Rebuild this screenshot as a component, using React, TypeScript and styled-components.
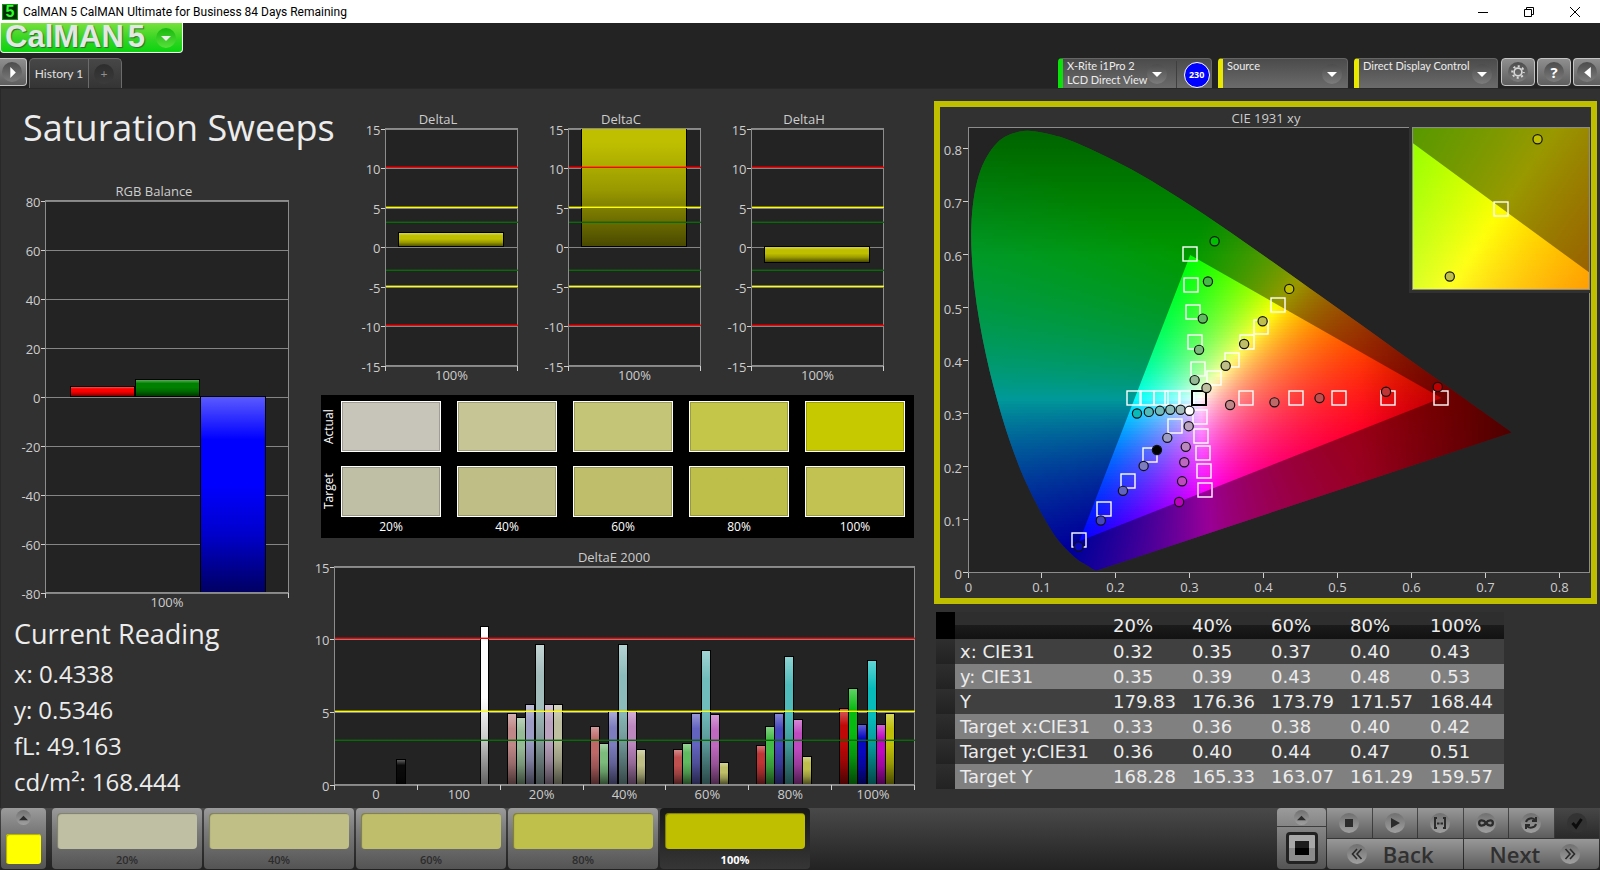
import React from "react";
import styled, { createGlobalStyle, css } from "styled-components";

const GlobalStyle = createGlobalStyle`
  *, *::before, *::after { box-sizing: border-box; }
  html, body { margin: 0; padding: 0; background: #313131; }
  body { font-family: "Open Sans", Lato, sans-serif; color: #ececec; }
  button { font: inherit; color: inherit; padding: 0; margin: 0; border: 0; background: none; cursor: pointer; }
  svg { display: block; }
`;

/* ---------- window frame ---------- */

const Page = styled.div`
  min-height: 100vh;
  display: flex;
  flex-direction: column;
`;

const TitleBar = styled.header`
  display: flex;
  align-items: center;
  height: 23px;
  padding: 0 20px 0 2px;
  background: #fff;
  color: #000;
  font: 12px/22px Roboto, "Open Sans", sans-serif;
`;

const AppMark = styled.span`
  width: 16px;
  height: 16px;
  margin-right: 5px;
  background: #032c03;
  border: 1px solid #0a9f0a;
  color: #2bff2b;
  font: bold 16px/14px "Liberation Sans", sans-serif;
  text-align: center;
`;

const WindowControls = styled.div`
  display: flex;
  gap: 36px;
  margin-left: auto;
`;

const WindowButton = styled.button`
  width: 10px;
  height: 12px;
`;

const HeaderArea = styled.div`
  background: #232323;
`;

const Logo = styled.button`
  display: flex;
  align-items: center;
  justify-content: space-between;
  width: 183px;
  height: 30px;
  padding: 0 6px 2px 4px;
  border: 1px solid #e6ffe6;
  border-top: 0;
  border-radius: 0 0 4px 4px;
  background: linear-gradient(#79e03c, #35d523 55%, #0bd30f);
  cursor: pointer;
`;

const LogoText = styled.span`
  display: flex;
  gap: 4px;
  font: bold 31px/30px "Liberation Sans", Arial, sans-serif;
  color: #e4e8e4;
  text-shadow: 1px 1px 1px #2c6d2c;
`;

const LogoArrow = styled.span`
  display: grid;
  place-items: center;
  width: 20px;
  height: 20px;
  margin-top: 2px;
  border-radius: 50%;
  background: linear-gradient(#17b80f, #58e03a);
`;

const Toolbar = styled.div`
  display: flex;
  align-items: flex-end;
  height: 35px;
`;

const Tabs = styled.nav`
  display: flex;
  margin-left: 2px;
  border: 1px solid #6b6b6b;
  border-bottom: 0;
  border-radius: 5px 5px 0 0;
  background: linear-gradient(#474747, #343434);
`;

const Tab = styled.button<{ $dim?: boolean }>`
  display: grid;
  place-items: center;
  height: 29px;
  width: ${(p) => (p.$dim ? 33 : 58)}px;
  padding-right: ${(p) => (p.$dim ? 2 : 0)}px;
  border-left: ${(p) => (p.$dim ? "1px solid #6b6b6b" : "0")};
  font: 12px/16px Lato, "Open Sans", sans-serif;
  color: #e0e0e0;
`;

const Round = styled.span<{ $dark?: boolean }>`
  display: grid;
  place-items: center;
  flex: none;
  width: 20px;
  height: 20px;
  border-radius: 50%;
  background: ${(p) => (p.$dark ? "linear-gradient(#2d2d2d, #3b3b3b)" : "linear-gradient(#4c4c4c, #7c7c7c)")};
  color: ${(p) => (p.$dark ? "#909090" : "#fff")};
`;

const Devices = styled.div`
  display: flex;
  align-items: flex-start;
  gap: 6px;
  margin-left: auto;
`;

const Device = styled.div<{ $accent: string; $width: number }>`
  display: flex;
  width: ${(p) => p.$width}px;
  height: 30px;
  border: 1px solid #666;
  border-bottom: 0;
  border-left: 5px solid ${(p) => p.$accent};
  border-radius: 4px 4px 0 0;
  background: linear-gradient(#4b4b4b, #6b6b6b);
`;

const DeviceButton = styled.button<{ $gauge?: boolean }>`
  display: flex;
  flex: 1;
  justify-content: space-between;
  padding: 0 ${(p) => (p.$gauge ? 9 : 5)}px 0 4px;
  text-align: left;
  font: 11px/14px Lato, "Open Sans", sans-serif;
  white-space: nowrap;

  ${Round} { margin-top: 5px; }
`;

const DeviceGauge = styled.div`
  display: grid;
  place-items: center;
  width: 35px;
  margin-top: 2px;
  padding-left: 5px;
  border-left: 1px solid #3f3f3f;
`;

const GaugeBadge = styled.span`
  width: 26px;
  height: 26px;
  border: 1px solid #fff;
  border-radius: 50%;
  background: #00f;
  font: bold 9px/24px "Open Sans", sans-serif;
  text-align: center;
  color: #fff;
`;

const IconButtons = styled.div`
  display: flex;
  gap: 2px;
  margin-left: -3px;
`;

const IconButton = styled.button<{ $edge?: "left" | "right" }>`
  display: grid;
  place-items: center;
  align-self: flex-start;
  width: ${(p) => (p.$edge ? 27 : 34)}px;
  height: 28px;
  border: 1px solid #c4c4c4;
  border-radius: 4px;
  background: linear-gradient(#8f8f8f, #5e5e5e);
  ${(p) => p.$edge === "left" && css`margin: 5px 0 0; padding-right: 2px; border-left: 0; border-radius: 0 4px 4px 0;`}
  ${(p) => p.$edge === "right" && css`border-right: 0; border-radius: 4px 0 0 4px;`}
`;

/* ---------- workspace ---------- */

const Workspace = styled.main`
  flex: 1;
  display: grid;
  grid-template-columns: minmax(0, 310fr) minmax(0, 614fr) minmax(0, 676fr);
  align-items: start;
  box-shadow: inset 1px 1px #282828;
  background: #313131;
`;

const Column = styled.section<{ $top: number; $left?: number; $right?: number }>`
  padding: ${(p) => p.$top}px ${(p) => p.$right ?? 0}px 0 ${(p) => p.$left ?? 0}px;
`;

const Chart = styled.svg`
  width: 100%;
  height: auto;
  font-family: "Open Sans", Lato, sans-serif;
  font-size: 13px;
  fill: #cdcdcd;
`;

const PageTitle = styled.h1`
  margin: 0 -40px 28px 23px;
  font-size: 36px;
  line-height: 44px;
  font-weight: 400;
  white-space: nowrap;
`;

const Reading = styled.dl`
  margin: 4px 0 0 14px;
  font-size: 24px;
  line-height: 36px;
`;

const ReadingTitle = styled.h2`
  margin: 2px 0 0;
  padding-left: 14px;
  font-size: 27px;
  line-height: 36px;
  font-weight: 400;
`;

const ReadingRow = styled.div`
  display: flex;
  gap: 6px;
  dt, dd { margin: 0; }
`;

const DeltaRow = styled.div`
  display: grid;
  grid-template-columns: repeat(3, minmax(0, 1fr));
  padding: 0 33px 0 32px;
`;

const SwatchPanel = styled.div`
  display: flex;
  flex-direction: column;
  gap: 14px;
  height: 143px;
  margin: 8px 10px 9px 11px;
  padding: 6px 9px 0 0;
  background: #000;
  color: #fff;
  font-size: 12px;
  line-height: 14px;
`;

const SwatchRow = styled.div`
  display: grid;
  grid-template-columns: 20px 1fr;
`;

const SwatchCells = styled.div`
  display: grid;
  grid-template-columns: repeat(5, minmax(0, 1fr));
  gap: 16px;
  text-align: center;
`;

const SwatchSide = styled.div`
  writing-mode: vertical-rl;
  transform: rotate(180deg);
  width: 16px;
  line-height: 16px;
  text-align: center;
`;

const Swatch = styled.div<{ $color: string }>`
  height: 51px;
  border: 1px solid #fff;
  box-shadow: inset 0 0 0 1px rgba(0, 0, 0, 0.2);
  background: ${(p) => p.$color};
`;

const SwatchLabels = styled(SwatchRow)`
  margin-top: -11px;
`;

const CieFrame = styled.div`
  border: 6px solid #bfbf00;
  background: #313131;
`;

const DataTable = styled.table`
  width: 568px;
  margin: 8px 0 0 2px;
  border-collapse: collapse;
  table-layout: fixed;
  font: 18px/25px "DejaVu Sans", sans-serif;
  color: #ececec;
  text-align: left;
  white-space: nowrap;

  th, td { padding: 0; font-weight: 400; overflow: visible; }
`;

const StubCell = styled.td<{ $head?: boolean }>`
  background: ${(p) => (p.$head ? "#000" : "linear-gradient(#2e2e2e, #222)")};
`;

const HeadRow = styled.tr`
  height: 27px;
  background: linear-gradient(#2e2e2e 0 48%, #1b1b1b 48%, #121212);
`;

const DataRow = styled.tr<{ $alt: boolean }>`
  height: 25px;
  background: ${(p) => (p.$alt ? "#808080" : "#404040")};
  th { padding-left: 5px; }
`;

/* ---------- footer ---------- */

const Footer = styled.footer`
  display: flex;
  height: 62px;
  padding: 0 1px;
  background: linear-gradient(#494949, #222);
`;

const raised = css`
  background: linear-gradient(#9b9b9b, #7c7c7c 35%, #545454);
`;

const SwatchPicker = styled.button`
  ${raised}
  display: flex;
  flex-direction: column;
  align-items: center;
  gap: 9px;
  width: 45px;
  height: 61px;
  padding-top: 2px;
  margin-right: 6px;
  border-radius: 4px;
`;

const PickedColor = styled.span`
  width: 35px;
  height: 30px;
  border-radius: 3px;
  background: #ff0;
  box-shadow: inset 1px 1px 1px #b0b000;
`;

const Steps = styled.div`
  display: flex;
  gap: 2px;
`;

const Step = styled.button<{ $active: boolean }>`
  ${raised}
  width: 150px;
  height: 61px;
  padding: 5px 5px 0;
  border-radius: 4px;
  font: ${(p) => (p.$active ? 700 : 600)} 11px/20px "Open Sans", sans-serif;
  color: #2c2c2c;
  ${(p) => p.$active && css`background: linear-gradient(#181818, #363636); color: #fff;`}
`;

const StepColor = styled.span<{ $color: string }>`
  display: block;
  height: 36px;
  margin-bottom: 1px;
  border-radius: 4px;
  background: ${(p) => p.$color};
  box-shadow: inset 1px 1px 1px rgba(0, 0, 0, 0.35);
`;

const Transport = styled.div`
  display: grid;
  grid-template-columns: 49px 272px;
  gap: 1px;
  margin-left: auto;
`;

const TargetPanel = styled.div`
  display: grid;
  grid-template-rows: 18px 42px;
  gap: 1px;
  height: 61px;
`;

const TargetTop = styled.button`
  display: grid;
  place-items: center;
  border-radius: 4px 4px 0 0;
  background: linear-gradient(#9b9b9b, #858585);
`;

const TargetStop = styled.button`
  display: grid;
  place-items: center;
  border-radius: 0 0 4px 4px;
  background: linear-gradient(#868686, #545454);
`;

const StopFrame = styled.span`
  display: grid;
  place-items: center;
  width: 32px;
  height: 32px;
  border: 3px solid #222;
  border-radius: 4px;
  background: linear-gradient(#a8a8a8 0 50%, #8a8a8a 50%);

  &::after {
    content: "";
    width: 14px;
    height: 14px;
    background: linear-gradient(#1c1c1c 0 50%, #000 50%);
  }
`;

const TransportKeys = styled.div`
  display: grid;
  grid-template-columns: repeat(6, 1fr);
  grid-template-rows: 30px 30px;
  gap: 1px;
  height: 61px;
`;

const Key = styled.button<{ $off?: boolean }>`
  display: grid;
  place-items: center;
  background: ${(p) => (p.$off ? "linear-gradient(#474747, #2a2a2a)" : "linear-gradient(#989898, #5c5c5c)")};
`;

const KeyRound = styled.span<{ $off?: boolean; $size?: number }>`
  display: grid;
  place-items: center;
  width: ${(p) => p.$size ?? 20}px;
  height: ${(p) => p.$size ?? 20}px;
  border-radius: 50%;
  background: ${(p) => (p.$off ? "#333" : "linear-gradient(#707070, #a0a0a0)")};
  color: ${(p) => (p.$off ? "#0c0c0c" : "#2b2b2b")};
`;

const WideKey = styled(Key)`
  grid-column: span 3;
  display: flex;
  align-items: center;
  justify-content: space-between;
  padding: 0 19px 0 20px;
  font: 600 22px/30px "Open Sans", sans-serif;
  color: #303030;
  &:nth-last-child(2) { padding-right: 29px; border-radius: 0 0 0 4px; }
  &:last-child { padding-left: 26px; border-radius: 0 0 4px 0; }
`;

/* ---------- bar charts ---------- */

type Bar = { x: number; w: number; value: number; color: string };
type Limit = { value: number; color: string };

type BarChartProps = {
  id: string;
  title: string;
  titleX: number;
  width: number;
  height: number;
  plot: { x: number; y: number; w: number; h: number };
  min: number;
  max: number;
  step: number;
  bars: Bar[];
  limits?: Limit[];
  categories: string[];
};

const BarChart = ({ id, title, titleX, width, height, plot, min, max, step, bars, limits = [], categories }: BarChartProps) => {
  const py = (v: number) => Math.round(plot.y + ((max - v) / (max - min)) * plot.h) + 0.5;
  const ticks: number[] = [];
  for (let v = max; v >= min; v -= step) ticks.push(v);
  const slot = plot.w / categories.length;
  const bottom = plot.y + plot.h;
  return (
    <Chart viewBox={`0 0 ${width} ${height}`} role="img" aria-label={title}>
      <defs>
        <linearGradient id={`${id}-gloss`} x1="0" y1="0" x2="0" y2="1">
          <stop offset="0" stopColor="#fff" stopOpacity=".36" />
          <stop offset=".22" stopColor="#fff" stopOpacity="0" />
          <stop offset=".45" stopColor="#000" stopOpacity="0" />
          <stop offset=".7" stopColor="#000" stopOpacity=".2" />
          <stop offset="1" stopColor="#000" stopOpacity=".62" />
        </linearGradient>
        <clipPath id={`${id}-clip`}>
          <rect x={plot.x} y={plot.y} width={plot.w} height={plot.h} />
        </clipPath>
      </defs>
      <text x={titleX} y={plot.y - 5} textAnchor="middle">{title}</text>
      <g shapeRendering="crispEdges">
        <rect x={plot.x} y={plot.y} width={plot.w} height={plot.h} fill="#232323" />
        {ticks.map((v) => (
          <g key={v}>
            <line x1={plot.x} x2={plot.x + plot.w} y1={py(v)} y2={py(v)} stroke="#858585" />
            <line x1={plot.x - 5} x2={plot.x} y1={py(v)} y2={py(v)} stroke="#d0d0d0" />
          </g>
        ))}
        <g clipPath={`url(#${id}-clip)`}>
          {bars.map((b, i) => {
            const scaled = (v: number) => plot.y + ((max - v) / (max - min)) * plot.h;
            const top = Math.min(py(0) - 1, scaled(b.value));
            const h = Math.abs(py(0) - 1 - scaled(b.value));
            return (
              <g key={i}>
                <rect x={b.x} y={top} width={b.w} height={h} fill={b.color} />
                <rect x={b.x} y={top} width={b.w} height={h} fill={`url(#${id}-gloss)`} stroke="#000" />
              </g>
            );
          })}
        </g>
        <rect x={plot.x} y={plot.y} width={plot.w} height={plot.h} fill="none" stroke="#8c8c8c" />
        {limits.map((l) => (
          <g key={l.value} stroke={l.color}>
            <line x1={plot.x} x2={plot.x + plot.w} y1={py(l.value) - 1} y2={py(l.value) - 1} />
            <line x1={plot.x} x2={plot.x + plot.w} y1={py(l.value) - 2} y2={py(l.value) - 2} strokeOpacity=".4" />
          </g>
        ))}
        {Array.from({ length: categories.length + 1 }, (_, i) => (
          <line key={i} x1={plot.x + slot * i} x2={plot.x + slot * i} y1={bottom} y2={bottom + 5} stroke="#d0d0d0" />
        ))}
      </g>
      {ticks.map((v) => (
        <text key={v} x={plot.x - 5} y={py(v) + 5} textAnchor="end">{v}</text>
      ))}
      {categories.map((c, i) => (
        <text key={c} x={plot.x + slot * (i + 0.5)} y={bottom + 14} textAnchor="middle">{c}</text>
      ))}
    </Chart>
  );
};

const DELTA_LIMITS: Limit[] = [
  { value: 10, color: "#f00" }, { value: 5, color: "#ff0" }, { value: 3, color: "#0a6a0a" },
  { value: -3, color: "#0a6a0a" }, { value: -5, color: "#ff0" }, { value: -10, color: "#f00" },
];

const DELTAS = [
  { title: "DeltaL", value: 1.8 },
  { title: "DeltaC", value: 24 },
  { title: "DeltaH", value: -1.9 },
];

const SERIES_COLORS = [
  ["#bf8787", "#96b996", "#9c9cc4", "#a3bcbc", "#bba3bf", "#bebea0"],
  ["#bf6868", "#7cbb7c", "#7c7cbf", "#8cbbbb", "#bc86bf", "#bebe86"],
  ["#bf5050", "#60bb60", "#6262bf", "#70bbbb", "#bf68bf", "#bebe68"],
  ["#bf3434", "#44bb44", "#4646bf", "#50bbbb", "#bf4abf", "#bebe4c"],
  ["#bf0808", "#08bb10", "#0808bf", "#08bbbb", "#bf08bf", "#bebe08"],
];

const SERIES_VALUES = [
  [4.9, 4.6, 5.5, 9.6, 5.5, 5.5],
  [4, 2.8, 5, 9.6, 5.1, 2.4],
  [2.4, 2.8, 4.9, 9.2, 4.8, 1.5],
  [2.7, 4, 4.9, 8.8, 4.5, 1.9],
  [5.2, 6.6, 4.1, 8.5, 4.1, 4.9],
];

const DELTA_E_BARS: Bar[] = [
  { x: 86, w: 9, value: 1.7, color: "#0a0a0a" },
  { x: 170, w: 8, value: 10.9, color: "#fff" },
  ...SERIES_VALUES.flatMap((row, r) =>
    row.map((value, i) => ({ x: 197 + r * 83 + Math.round(i * 9.2), w: 9, value, color: SERIES_COLORS[r][i] })),
  ),
];

/* ---------- chromaticity diagram ---------- */

type Point = [number, number];

const LOCUS: Point[] = [
  [0.1741, 0.005], [0.1714, 0.0051], [0.1689, 0.0069], [0.1644, 0.0109], [0.1566, 0.0177], [0.144, 0.0297],
  [0.1241, 0.0578], [0.1096, 0.0868], [0.0913, 0.1327], [0.0687, 0.2007], [0.0454, 0.295], [0.0235, 0.4127],
  [0.0082, 0.5384], [0.0039, 0.6548], [0.0139, 0.7502], [0.0389, 0.812], [0.0743, 0.8338], [0.1142, 0.8262],
  [0.1547, 0.8059], [0.2296, 0.7543], [0.3016, 0.6923], [0.3731, 0.6245], [0.4441, 0.5547], [0.5125, 0.4866],
  [0.5752, 0.4242], [0.627, 0.3725], [0.6658, 0.334], [0.6915, 0.3083], [0.719, 0.2809], [0.7347, 0.2653],
];

const GAMUT: Point[] = [[0.64, 0.33], [0.3, 0.6], [0.15, 0.06]];

const TARGETS: Point[] = [
  [0.3, 0.602], [0.301, 0.543], [0.304, 0.492], [0.306, 0.436], [0.31, 0.385],
  [0.419, 0.505], [0.396, 0.465], [0.377, 0.436], [0.356, 0.402], [0.332, 0.367],
  [0.224, 0.33], [0.242, 0.33], [0.26, 0.33], [0.276, 0.33], [0.295, 0.33],
  [0.375, 0.33], [0.443, 0.33], [0.502, 0.33], [0.568, 0.33], [0.64, 0.33],
  [0.313, 0.294], [0.315, 0.258], [0.317, 0.226], [0.319, 0.192], [0.32, 0.157],
  [0.28, 0.277], [0.246, 0.223], [0.216, 0.173], [0.184, 0.121], [0.149, 0.062],
];

const MEASURED: [number, number, string][] = [
  [0.333, 0.626, "#00bf00"], [0.324, 0.55, "#44bb44"], [0.317, 0.48, "#60bb60"], [0.312, 0.421, "#7cbb7c"], [0.306, 0.364, "#96b996"],
  [0.434, 0.536, "#bfbf00"], [0.398, 0.475, "#bebe4c"], [0.373, 0.432, "#bebe68"], [0.348, 0.391, "#bebe86"], [0.322, 0.349, "#bebea0"],
  [0.354, 0.317, "#bf8787"], [0.414, 0.322, "#bf6868"], [0.475, 0.33, "#bf5050"], [0.565, 0.342, "#bf3434"], [0.635, 0.351, "#bf0000"],
  [0.228, 0.301, "#08bbbb"], [0.244, 0.304, "#50bbbb"], [0.259, 0.306, "#70bbbb"], [0.273, 0.308, "#8cbbbb"], [0.287, 0.308, "#a3bcbc"],
  [0.298, 0.277, "#bba3bf"], [0.294, 0.238, "#bc86bf"], [0.292, 0.209, "#bf68bf"], [0.289, 0.173, "#bf4abf"], [0.285, 0.134, "#bf00bf"],
  [0.269, 0.255, "#9c9cc4"], [0.237, 0.202, "#7c7cbf"], [0.209, 0.155, "#6262bf"], [0.179, 0.099, "#4646bf"], [0.149, 0.05, "#0808bf"],
  [0.299, 0.306, "#fff"], [0.255, 0.232, "#000"],
];

const chromaColor = (x: number, y: number) => {
  const z = 1 - x - y;
  const lin = [
    3.2406 * x - 1.5372 * y - 0.4986 * z,
    -0.9689 * x + 1.8758 * y + 0.0415 * z,
    0.0557 * x - 0.204 * y + 1.057 * z,
  ].map((c) => Math.max(0, c));
  const peak = Math.max(...lin, 0.0001);
  const fade = Math.max(0.4, 1 - Math.max(0, x - 0.53) * 2.4 - Math.max(0, y - 0.6) * 1.5);
  const [r, g, b] = lin.map((c) => Math.round((255 * fade * c) / peak));
  return `rgb(${r},${g},${b})`;
};

type Map2 = { x0: number; y0: number; sx: number; sy: number };
const mapX = (m: Map2, x: number) => m.x0 + x * m.sx;
const mapY = (m: Map2, y: number) => m.y0 - y * m.sy;

const polygon = (m: Map2, pts: Point[]) =>
  "M" + pts.map(([x, y]) => `${mapX(m, x).toFixed(1)} ${mapY(m, y).toFixed(1)}`).join("L") + "Z";

const smooth = (m: Map2, pts: Point[]) => {
  const p = pts.map(([x, y]) => [mapX(m, x), mapY(m, y)]);
  let d = `M${p[0][0]} ${p[0][1]}`;
  for (let i = 0; i < p.length - 1; i++) {
    const a = p[Math.max(0, i - 1)], b = p[i], c = p[i + 1], e = p[Math.min(p.length - 1, i + 2)];
    d += `C${b[0] + (c[0] - a[0]) / 6} ${b[1] + (c[1] - a[1]) / 6} ${c[0] - (e[0] - b[0]) / 6} ${c[1] - (e[1] - b[1]) / 6} ${c[0]} ${c[1]}`;
  }
  return d + "Z";
};

type FieldProps = { id: string; map: Map2; x: number; y: number; w: number; h: number };

/* Scan lines of the chromaticity colours, one gradient per line. */
const ColorField = ({ id, map, x, y, w, h }: FieldProps) => {
  const rowHeight = 3;
  const stops = Math.ceil(w / 9);
  return (
    <g shapeRendering="crispEdges">
      {Array.from({ length: Math.ceil(h / rowHeight) }, (_, r) => {
        const top = y + r * rowHeight;
        const cy = (map.y0 - top - rowHeight / 2) / map.sy;
        return (
          <React.Fragment key={r}>
            <linearGradient id={`${id}${r}`}>
              {Array.from({ length: stops + 1 }, (_, s) => (
                <stop key={s} offset={s / stops} stopColor={chromaColor((x + (w * s) / stops - map.x0) / map.sx, cy)} />
              ))}
            </linearGradient>
            <rect x={x} y={top} width={w} height={rowHeight} fill={`url(#${id}${r})`} />
          </React.Fragment>
        );
      })}
    </g>
  );
};

const Markers = ({ map }: { map: Map2 }) => (
  <g fill="none" strokeWidth="1.4">
    {TARGETS.map(([x, y], i) => (
      <rect key={i} x={Math.round(mapX(map, x)) - 7} y={Math.round(mapY(map, y)) - 7} width="14" height="14" stroke="#fff" />
    ))}
    <rect x={Math.round(mapX(map, 0.312)) - 7} y={Math.round(mapY(map, 0.33)) - 7} width="14" height="14" stroke="#000" strokeWidth="2" />
    {MEASURED.map(([x, y, c], i) => (
      <circle key={i} cx={mapX(map, x)} cy={mapY(map, y)} r="4.6" fill={c} stroke="#111" strokeWidth="1.2" />
    ))}
  </g>
);

const MAIN: Map2 = { x0: 28.5, y0: 466, sx: 739, sy: 530 };
const INSET: Map2 = { x0: 561 - 0.419 * 2439, y0: 102 + 0.505 * 2250, sx: 2439, sy: 2250 };

const CieChart = () => (
  <Chart viewBox="0 0 651 491" role="img" aria-label="CIE 1931 xy">
    <defs>
      <clipPath id="locus"><path d={smooth(MAIN, LOCUS)} /></clipPath>
      <clipPath id="plotArea"><rect x="29" y="21" width="621" height="445" /></clipPath>
      <clipPath id="insetArea"><rect x="473" y="21" width="177" height="162" /></clipPath>
    </defs>
    <text x="326" y="16" textAnchor="middle">CIE 1931 xy</text>
    <rect x="28.5" y="20.5" width="621" height="445" fill="#232323" stroke="#8c8c8c" />
    <g clipPath="url(#locus)">
      <ColorField id="cie" map={MAIN} x={29} y={21} w={545} h={445} />
      <path d={`M0 0H651V491H0Z${polygon(MAIN, GAMUT)}`} fillRule="evenodd" fill="#000" fillOpacity=".4" />
    </g>
    <g clipPath="url(#plotArea)"><Markers map={MAIN} /></g>
    <rect x="469" y="18" width="182" height="168" fill="#313131" />
    <g clipPath="url(#insetArea)">
      <ColorField id="zoom" map={INSET} x={473} y={21} w={177} h={162} />
      <path d={`M400 0H700V300H400Z${polygon(INSET, GAMUT)}`} fillRule="evenodd" fill="#000" fillOpacity=".4" />
      <Markers map={INSET} />
    </g>
    <rect x="472.5" y="20.5" width="177" height="162" fill="none" stroke="#8c8c8c" />
    {Array.from({ length: 9 }, (_, i) => {
      const label = i === 0 ? "0" : `0.${i}`;
      const x = Math.round(mapX(MAIN, i / 10)) - 0.5;
      const y = Math.round(mapY(MAIN, i / 10)) - 0.5;
      return (
        <g key={i}>
          <path d={`M${x} 466v5M28 ${y}h-5`} stroke="#d0d0d0" />
          <text x={x} y="485" textAnchor="middle">{label}</text>
          <text x="22" y={y + 6} textAnchor="end">{label}</text>
        </g>
      );
    })}
  </Chart>
);

/* ---------- data ---------- */

const STEPS = [
  { label: "20%", color: "#bfbfa3" },
  { label: "40%", color: "#bfbf86" },
  { label: "60%", color: "#bfbf6b" },
  { label: "80%", color: "#bfbf4b" },
  { label: "100%", color: "#bfbf00" },
];

const SWATCHES = [
  { name: "Actual", colors: ["#c7c5b9", "#c6c595", "#c5c577", "#c4c64a", "#c6c900"] },
  { name: "Target", colors: ["#bfbfa5", "#bfbe86", "#bebe6b", "#bebf4b", "#c2c252"] },
];

const ROWS = [
  ["x: CIE31", "0.32", "0.35", "0.37", "0.40", "0.43"],
  ["y: CIE31", "0.35", "0.39", "0.43", "0.48", "0.53"],
  ["Y", "179.83", "176.36", "173.79", "171.57", "168.44"],
  ["Target x:CIE31", "0.33", "0.36", "0.38", "0.40", "0.42"],
  ["Target y:CIE31", "0.36", "0.40", "0.44", "0.47", "0.51"],
  ["Target Y", "168.28", "165.33", "163.07", "161.29", "159.57"],
];

const READINGS = [["x:", "0.4338"], ["y:", "0.5346"], ["fL:", "49.163"], ["cd/m²:", "168.444"]];

/* ---------- icons ---------- */

const Triangle = ({ dir, size = 10 }: { dir: "up" | "down" | "left" | "right"; size?: number }) => {
  const d = { up: "M0 8L5 3L10 8Z", down: "M0 3H10L5 8Z", left: "M2 5L8 0V10Z", right: "M3 0L8 5L3 10Z" }[dir];
  return <svg width={size} height={size} viewBox="0 0 10 10" fill="currentColor" aria-hidden="true"><path d={d} /></svg>;
};

const Stroke = ({ d, size = 14, width = 2 }: { d: string; size?: number; width?: number }) => (
  <svg width={size} height={size} viewBox="0 0 14 14" fill="none" stroke="currentColor" strokeWidth={width} aria-hidden="true"><path d={d} /></svg>
);

const Gear = () => (
  <svg width="14" height="14" viewBox="0 0 14 14" fill="none" stroke="#d8d8d8" aria-hidden="true">
    <circle cx="7" cy="7" r="3.9" strokeWidth="1.7" />
    <circle cx="7" cy="7" r="5.8" strokeWidth="1.9" strokeDasharray="2.1 2.455" strokeDashoffset="1" />
  </svg>
);

const QuestionMark = styled.span`
  font: bold 15px/20px "Open Sans", sans-serif;
  color: #fff;
`;

/* ---------- page ---------- */

const App = () => (
  <>
    <GlobalStyle />
    <Page>
      <TitleBar>
        <AppMark aria-hidden="true">5</AppMark>
        <span>CalMAN 5 CalMAN Ultimate for Business 84 Days Remaining</span>
        <WindowControls>
          <WindowButton aria-label="Minimize">
            <svg width="10" height="12" stroke="#000"><path d="M0 6.5H10" /></svg>
          </WindowButton>
          <WindowButton aria-label="Restore">
            <svg width="10" height="12" stroke="#000" fill="none"><path d="M.5 3.5H7.5V10.5H.5ZM2.5 3.5V1.5H9.5V8.5H7.5" /></svg>
          </WindowButton>
          <WindowButton aria-label="Close">
            <svg width="10" height="12" stroke="#000"><path d="M0 1L10 11M10 1L0 11" /></svg>
          </WindowButton>
        </WindowControls>
      </TitleBar>

      <HeaderArea>
        <Logo aria-label="CalMAN 5 menu">
          <LogoText><span>CalMAN</span><span>5</span></LogoText>
          <LogoArrow><Triangle dir="down" /></LogoArrow>
        </Logo>
        <Toolbar>
          <IconButton $edge="left" aria-label="Show panel"><Round><Triangle dir="right" size={11} /></Round></IconButton>
          <Tabs>
            <Tab>History 1</Tab>
            <Tab $dim aria-label="Add tab"><Round $dark>+</Round></Tab>
          </Tabs>
          <Devices>
            <Device $accent="#0be00b" $width={154}>
              <DeviceButton $gauge>
                <span>X-Rite i1Pro 2<br />LCD Direct View</span>
                <Round><Triangle dir="down" /></Round>
              </DeviceButton>
              <DeviceGauge><GaugeBadge>230</GaugeBadge></DeviceGauge>
            </Device>
            <Device $accent="#e8e800" $width={130}>
              <DeviceButton>
                <span>Source</span>
                <Round><Triangle dir="down" /></Round>
              </DeviceButton>
            </Device>
            <Device $accent="#e8e800" $width={144}>
              <DeviceButton>
                <span>Direct Display Control</span>
                <Round><Triangle dir="down" /></Round>
              </DeviceButton>
            </Device>
            <IconButtons>
              <IconButton aria-label="Settings"><Round><Gear /></Round></IconButton>
              <IconButton aria-label="Help"><Round><QuestionMark>?</QuestionMark></Round></IconButton>
              <IconButton $edge="right" aria-label="Show side panel"><Round><Triangle dir="left" size={11} /></Round></IconButton>
            </IconButtons>
          </Devices>
        </Toolbar>
      </HeaderArea>

      <Workspace>
        <Column $top={18}>
          <PageTitle>Saturation Sweeps</PageTitle>
          <BarChart
            id="rgb" title="RGB Balance" titleX={154} width={310} height={436}
            plot={{ x: 45.5, y: 22.5, w: 243, h: 392 }}
            min={-80} max={80} step={20}
            bars={[
              { x: 70.5, w: 64, value: 4, color: "#f00" },
              { x: 135.5, w: 64, value: 6.8, color: "#008000" },
              { x: 200.5, w: 65, value: -80, color: "#00f" },
            ]}
            categories={["100%"]}
          />
          <ReadingTitle>Current Reading</ReadingTitle>
          <Reading>
            {READINGS.map(([k, v]) => (
              <ReadingRow key={k}><dt>{k}</dt><dd>{v}</dd></ReadingRow>
            ))}
          </Reading>
        </Column>

        <Column $top={19}>
          <DeltaRow>
            {DELTAS.map((d) => (
              <BarChart
                key={d.title} id={d.title} title={d.title} titleX={96} width={183} height={280}
                plot={{ x: 43.5, y: 21.5, w: 132, h: 237 }}
                min={-15} max={15} step={5}
                bars={[{ x: 56.5, w: 105, value: d.value, color: "#bfbf00" }]}
                limits={DELTA_LIMITS}
                categories={["100%"]}
              />
            ))}
          </DeltaRow>
          <SwatchPanel>
            {SWATCHES.map((row) => (
              <SwatchRow key={row.name}>
                <SwatchSide>{row.name}</SwatchSide>
                <SwatchCells>{row.colors.map((c) => <Swatch key={c} $color={c} />)}</SwatchCells>
              </SwatchRow>
            ))}
            <SwatchLabels>
              <span />
              <SwatchCells>{STEPS.map((s) => <span key={s.label}>{s.label}</span>)}</SwatchCells>
            </SwatchLabels>
          </SwatchPanel>
          <BarChart
            id="de" title="DeltaE 2000" titleX={304} width={614} height={260}
            plot={{ x: 24.5, y: 19.5, w: 580, h: 218 }}
            min={0} max={15} step={5}
            bars={DELTA_E_BARS}
            limits={[{ value: 10, color: "#f00" }, { value: 5, color: "#ff0" }, { value: 3, color: "#0a6a0a" }]}
            categories={["0", "100", "20%", "40%", "60%", "80%", "100%"]}
          />
        </Column>

        <Column $top={13} $left={10} $right={3}>
          <CieFrame><CieChart /></CieFrame>
          <DataTable>
            <colgroup>
              <col width="19" />
              <col width="158" />
              <col width="79" /><col width="79" /><col width="79" /><col width="80" />
              <col />
            </colgroup>
            <thead>
              <HeadRow>
                <StubCell $head />
                <td />
                {STEPS.map((s) => <th key={s.label} scope="col">{s.label}</th>)}
              </HeadRow>
            </thead>
            <tbody>
              {ROWS.map(([name, ...values], i) => (
                <DataRow key={name} $alt={i % 2 === 1}>
                  <StubCell />
                  <th scope="row">{name}</th>
                  {values.map((v, j) => <td key={j}>{v}</td>)}
                </DataRow>
              ))}
            </tbody>
          </DataTable>
        </Column>
      </Workspace>

      <Footer>
        <SwatchPicker aria-label="Pick colour">
          <KeyRound $size={15}><Triangle dir="up" size={9} /></KeyRound>
          <PickedColor />
        </SwatchPicker>
        <Steps>
          {STEPS.map((s) => (
            <Step key={s.label} $active={s.label === "100%"}>
              <StepColor $color={s.color} />
              {s.label}
            </Step>
          ))}
        </Steps>
        <Transport>
          <TargetPanel>
            <TargetTop aria-label="Expand"><KeyRound $size={15}><Triangle dir="up" size={9} /></KeyRound></TargetTop>
            <TargetStop aria-label="Target window"><StopFrame /></TargetStop>
          </TargetPanel>
          <TransportKeys>
            <Key aria-label="Stop"><KeyRound><svg width="8" height="8"><rect width="8" height="8" fill="currentColor" /></svg></KeyRound></Key>
            <Key aria-label="Play"><KeyRound><svg width="10" height="10" fill="currentColor"><path d="M1 0L10 5L1 10Z" /></svg></KeyRound></Key>
            <Key aria-label="Read series"><KeyRound><Stroke width={2} d="M4 2H2V12H4M10 2H12V12H10M4 7.5H6M6.5 7.5H7.5M8 7.5H10" /></KeyRound></Key>
            <Key aria-label="Read continuously"><KeyRound><Stroke width={2} size={16} d="M7 7C5 4 1 4 1 7S5 10 7 7S13 4 13 7S9 10 7 7Z" /></KeyRound></Key>
            <Key aria-label="Refresh"><KeyRound><Stroke d="M2 6C3 2 9 1 11.500 4.500M12 1V5H8M12 8C11 12 5 13 2.500 9.500M2 13V9H6" /></KeyRound></Key>
            <Key $off aria-label="Accept"><KeyRound $off><Stroke width={3} d="M2.500 7L6 11L11.500 3" /></KeyRound></Key>
            <WideKey><KeyRound><Stroke width={1.6} d="M7 2L2.500 7L7 12M11.500 2L7 7L11.500 12" /></KeyRound>Back</WideKey>
            <WideKey>Next<KeyRound><Stroke width={1.6} d="M2.500 2L7 7L2.500 12M7 2L11.500 7L7 12" /></KeyRound></WideKey>
          </TransportKeys>
        </Transport>
      </Footer>
    </Page>
  </>
);

export default App;
